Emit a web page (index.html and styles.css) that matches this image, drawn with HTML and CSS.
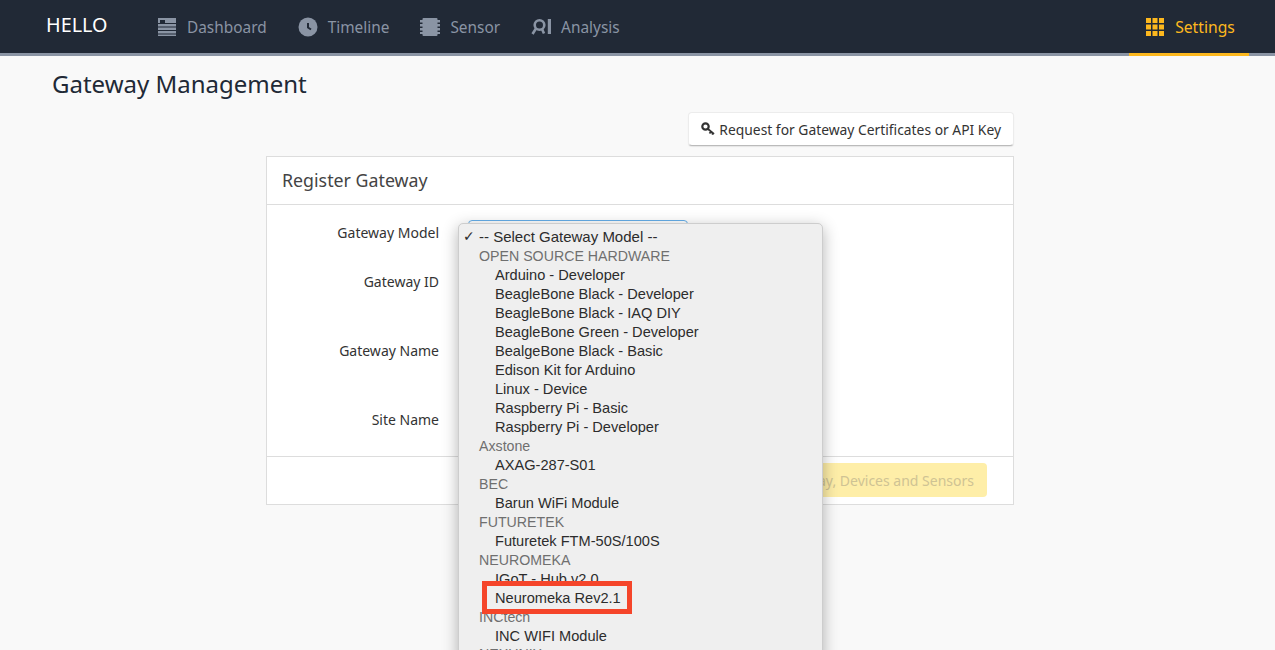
FILE: index.html
```html
<!DOCTYPE html>
<html lang="en">
<head>
    <meta charset="UTF-8">
    <title>Gateway Management</title>
    <link rel="stylesheet" href="styles.css">
</head>
<body>
    <nav class="navbar">
        <a class="brand">HELLO</a>
        <ul class="nav-links">
            <li>
                <svg class="nav-icon" width="20" height="20" viewBox="0 0 20 20"><path fill="currentColor" d="M1 1h18v5H8V3H3v3H1zM1 7h18v2.500H1zM1 10.500h18V13H1zM1 14h18v2.500H1zM1 17.500h18V19H1z"/></svg>
                Dashboard
            </li>
            <li>
                <svg class="nav-icon" width="20" height="20" viewBox="0 0 20 20"><circle cx="10" cy="10" r="9.500" fill="currentColor"/><path d="M10 6v4.500l3 2" fill="none" stroke="#212936" stroke-width="2"/></svg>
                Timeline
            </li>
            <li>
                <svg class="nav-icon" width="20" height="20" viewBox="0 0 20 20"><path fill="currentColor" d="M3.500 1h13a1 1 0 0 1 1 1v1H20v2.500h-2.500V7H20v2.500h-2.500V11H20v2.500h-2.500V15H20v2h-2.500v1a1 1 0 0 1-1 1h-13a1 1 0 0 1-1-1v-1H0v-2h2.500v-1.500H0V11h2.500V9.500H0V7h2.500V5.500H0V3h2.500V2a1 1 0 0 1 1-1z"/></svg>
                Sensor
            </li>
            <li>
                <svg class="nav-icon" width="20" height="20" viewBox="0 0 20 20"><circle cx="8.500" cy="8" r="4.800" fill="none" stroke="currentColor" stroke-width="2.600"/><path fill="none" stroke="currentColor" stroke-width="2.600" d="M5 11.500L1.500 17M11 12l2 4.500"/><path fill="currentColor" d="M16.800 2H20v15h-3.200z"/></svg>
                Analysis
            </li>
        </ul>
        <div class="nav-settings">
            <svg width="18" height="18" viewBox="0 0 18 18"><path fill="currentColor" d="M0 0h5v5H0zM6.500 0h5v5h-5zM13 0h5v5h-5zM0 6.500h5v5H0zM6.500 6.500h5v5h-5zM13 6.500h5v5h-5zM0 13h5v5H0zM6.500 13h5v5h-5zM13 13h5v5h-5z"/></svg>
            Settings
        </div>
    </nav>

    <main class="content">
        <h1>Gateway Management</h1>
        <div class="actions">
            <button class="btn-request">
                <svg width="14" height="14" viewBox="0 0 14 14"><circle cx="4.500" cy="4.500" r="3.200" fill="none" stroke="#333" stroke-width="2.200"/><path d="M7 7l6 5M10 9.500l-1.500 2M12 11l-1 1.500" fill="none" stroke="#333" stroke-width="1.800"/></svg>
                Request for Gateway Certificates or API Key
            </button>
        </div>

        <section class="panel">
            <div class="panel-heading">Register Gateway</div>
            <div class="panel-body">
                <div class="form-row row-model">
                    <label>Gateway Model</label>
                    <div class="select-focus"></div>
                </div>
                <div class="form-row row-id"><label>Gateway ID</label></div>
                <div class="form-row row-name"><label>Gateway Name</label></div>
                <div class="form-row row-site"><label>Site Name</label></div>
            </div>
            <div class="panel-footer">
                <button class="btn-submit">Register Gateway, Devices and Sensors</button>
            </div>
        </section>
    </main>

    <!-- native select popup, open over the form -->
    <div class="select-menu">
        <div class="opt selected"><span class="check">✓</span>-- Select Gateway Model --</div>
        <div class="group">OPEN SOURCE HARDWARE</div>
        <div class="opt">Arduino - Developer</div>
        <div class="opt">BeagleBone Black - Developer</div>
        <div class="opt">BeagleBone Black - IAQ DIY</div>
        <div class="opt">BeagleBone Green - Developer</div>
        <div class="opt">BealgeBone Black - Basic</div>
        <div class="opt">Edison Kit for Arduino</div>
        <div class="opt">Linux - Device</div>
        <div class="opt">Raspberry Pi - Basic</div>
        <div class="opt">Raspberry Pi - Developer</div>
        <div class="group">Axstone</div>
        <div class="opt">AXAG-287-S01</div>
        <div class="group">BEC</div>
        <div class="opt">Barun WiFi Module</div>
        <div class="group">FUTURETEK</div>
        <div class="opt">Futuretek FTM-50S/100S</div>
        <div class="group">NEUROMEKA</div>
        <div class="opt">IGoT - Hub v2.0</div>
        <div class="opt">Neuromeka Rev2.1</div>
        <div class="group">INCtech</div>
        <div class="opt">INC WIFI Module</div>
        <div class="group last">NEXUNIX</div>
    </div>

    <div class="callout"></div>
</body>
</html>
```

FILE: styles.css
```css
html, body {
    height: 650px;
    overflow: hidden;
}
body {
    margin: 0;
    background-color: #f9f9f9;
    color: #333;
    font-family: "Noto Sans", "Noto Sans CJK KR", sans-serif;
    font-size: 14px;
}
.navbar {
    display: flex;
    align-items: stretch;
    height: 53px;
    background-color: #212936;
    border-bottom: 3px solid #8a94a4;
    color: #8a94a4;
}
.brand {
    width: 111px;
    padding: 12px 0 0 46px;
    box-sizing: content-box;
    color: #fff;
    font-size: 19.8px;
    line-height: 26px;
}
.nav-links {
    display: flex;
    gap: 31px;
    margin: 0;
    padding: 1px 0 0;
    list-style: none;
}
.nav-links li {
    display: flex;
    align-items: center;
    gap: 10px;
    font-size: 15.4px;
}
.nav-settings {
    display: flex;
    align-items: center;
    justify-content: center;
    gap: 11px;
    width: 120px;
    height: 56px;
    margin-left: auto;
    margin-right: 26px;
    padding-left: 3px;
    box-sizing: border-box;
    border-bottom: 3px solid #fdb81e;
    color: #fdb81e;
    font-size: 15.7px;
}
.content {
    padding: 0 261px 0 266px;
}
h1 {
    margin: 11px 0 0 -214px;
    color: #212936;
    font-size: 24px;
    font-weight: 400;
    line-height: 34px;
}
.actions {
    display: flex;
    justify-content: flex-end;
    margin-top: 11px;
}
.btn-request {
    display: flex;
    align-items: center;
    gap: 4px;
    height: 34px;
    padding: 0 12px;
    background-color: #fff;
    border: 1px solid #ececec;
    border-bottom: 1px solid #bbb;
    border-radius: 4px;
    box-shadow: 0 1px 1px rgba(0, 0, 0, 0.08);
    color: #333;
    font-family: inherit;
    font-size: 13.85px;
}
.panel {
    margin-top: 10px;
    background-color: #fff;
    border: 1px solid #ddd;
}
.panel-heading {
    height: 47px;
    padding-left: 15px;
    border-bottom: 1px solid #ddd;
    color: #444;
    font-size: 17.8px;
    line-height: 47px;
}
.panel-body {
    height: 251px;
    box-sizing: border-box;
    padding-top: 15px;
}
.form-row {
    display: flex;
    position: relative;
}
.form-row label {
    width: 172px;
    text-align: right;
    line-height: 26px;
}
.row-id { margin-top: 23px; }
.row-name { margin-top: 43px; }
.row-site { margin-top: 43px; }
.select-focus {
    position: absolute;
    left: 201px;
    top: 0;
    width: 218px;
    height: 30px;
    border: 1px solid #66afe9;
    border-radius: 4px;
}
.panel-footer {
    display: flex;
    justify-content: flex-end;
    height: 48px;
    box-sizing: border-box;
    padding: 6px 26px 0 0;
    border-top: 1px solid #ddd;
}
.btn-submit {
    height: 34px;
    padding: 0 13px 0 12px;
    background-color: #feeea8;
    border: none;
    border-radius: 4px;
    color: #cfc394;
    font-family: inherit;
    font-size: 14px;
}
.select-menu {
    position: absolute;
    left: 458px;
    top: 223px;
    width: 365px;
    height: 440px;
    box-sizing: border-box;
    padding-top: 4px;
    background-color: #efefef;
    border: 1px solid #cdcdcd;
    border-radius: 5px;
    box-shadow: 0 4px 16px rgba(0, 0, 0, 0.3);
    color: #2c2c2c;
    font-family: "Liberation Sans", Arial, sans-serif;
    font-size: 14.6px;
    line-height: 19px;
}
.group {
    padding-left: 20px;
    color: #6f6f6f;
    font-size: 14.2px;
}
.group.last {
    margin-top: -1px;
}
.opt {
    padding-left: 36px;
}
.opt.selected {
    position: relative;
    padding-left: 20px;
    margin-bottom: 2px;
    font-size: 15px;
    line-height: 17px;
}
.check {
    position: absolute;
    left: 4px;
    font-family: "DejaVu Sans", sans-serif;
    font-size: 14px;
    font-weight: 700;
}
.callout {
    position: absolute;
    left: 482px;
    top: 581px;
    width: 140px;
    height: 23px;
    border: 5px solid #f5452a;
}
```
